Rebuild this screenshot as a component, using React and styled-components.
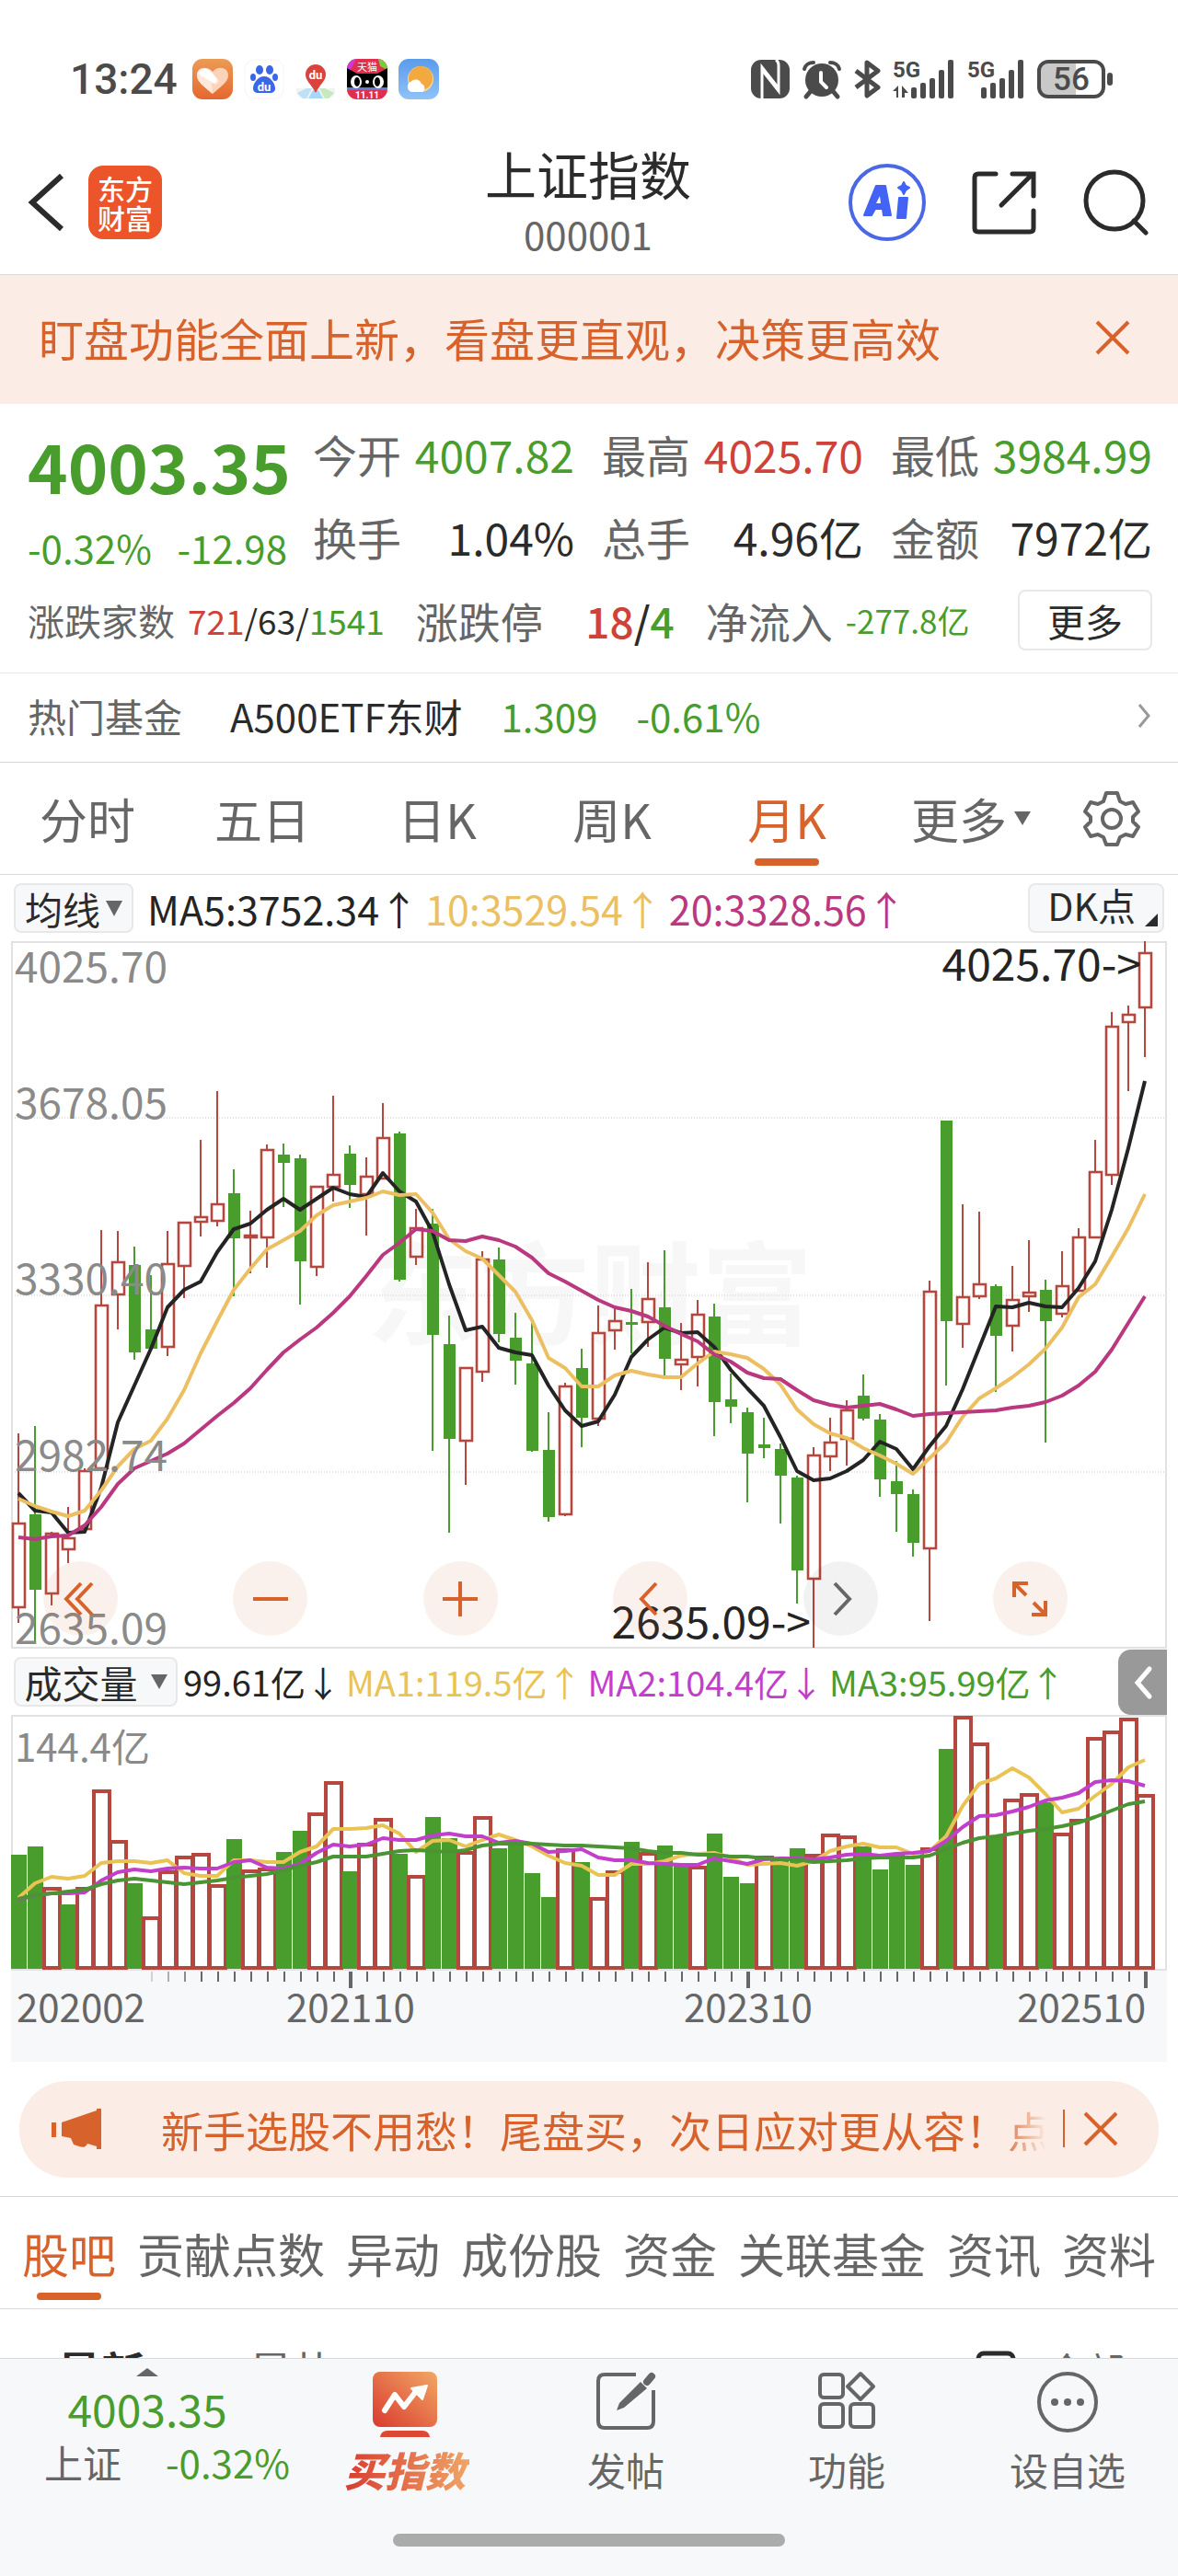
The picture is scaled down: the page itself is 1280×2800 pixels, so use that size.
import React from "react";
import styled, { createGlobalStyle } from "styled-components";

const color = {
  text: "#2b2b2b",
  mid: "#666666",
  soft: "#8a8a8a",
  green: "#489d2d",
  red: "#cf4239",
  orange: "#d8622b",
  accentBg: "#fbede5",
  panel: "#f7f8fa",
  line: "#d9d9d9",
  hair: "#e8e8e8",
  ma5: "#242424",
  ma10: "#ebbf62",
  ma20: "#b9387f",
  vol1: "#e9c353",
  vol2: "#c13fcb",
  candleRed: "#b5473f",
};

const family = '"Noto Sans CJK SC", "Noto Sans", sans-serif';

const GlobalStyle = createGlobalStyle`
  * { box-sizing: border-box; }
  body { margin: 0; background: #fff; color: ${color.text}; font-family: ${family}; }
  button, select { font: inherit; color: inherit; background: none; border: 0; padding: 0; margin: 0; }
  button { cursor: pointer; white-space: nowrap; }
  h1, p, dl, dt, dd { margin: 0; font-weight: 400; }
  svg { display: block; flex: none; overflow: visible; }
`;

/* ---------- data ---------- */

const STEP = 18;
const FIRST = 20;
const cx = (i) => FIRST + i * STEP;

// [kind, high, bodyTop, bodyBottom, low], measured down from the top of the plot
const candles = [
  ["r", 535, 633, 724, 741], ["g", 527, 623, 705, 763], ["r", 642, 644, 709, 722], ["r", 615, 649, 661, 676],
  ["r", 573, 576, 639, 639], ["r", 314, 396, 573, 573], ["r", 315, 349, 384, 422], ["g", 332, 352, 447, 455],
  ["g", 363, 422, 443, 443], ["r", 315, 351, 441, 451], ["r", 306, 306, 353, 388], ["r", 216, 300, 305, 321],
  ["r", 163, 286, 304, 310], ["g", 248, 274, 323, 386], ["r", 293, 320, 322, 361], ["r", 221, 227, 322, 355],
  ["g", 220, 232, 241, 289], ["g", 232, 236, 348, 395], ["r", 267, 267, 354, 364], ["r", 168, 254, 267, 283],
  ["g", 222, 231, 265, 290], ["r", 235, 256, 275, 320], ["r", 176, 214, 258, 258], ["g", 207, 209, 368, 370],
  ["r", 291, 312, 343, 352], ["g", 291, 307, 428, 554], ["g", 407, 438, 541, 643], ["r", 463, 464, 543, 591],
  ["r", 337, 346, 468, 479], ["g", 333, 346, 427, 436], ["g", 404, 431, 456, 482], ["g", 414, 459, 554, 555],
  ["g", 512, 553, 626, 631], ["r", 480, 484, 623, 625], ["g", 443, 464, 518, 550], ["r", 396, 426, 519, 527],
  ["r", 399, 413, 423, 444], ["g", 378, 414, 417, 448], ["r", 349, 389, 414, 441], ["g", 336, 398, 454, 473],
  ["r", 415, 455, 460, 488], ["r", 390, 406, 452, 484], ["g", 394, 408, 501, 538], ["g", 470, 498, 506, 524],
  ["g", 507, 512, 557, 610], ["g", 518, 547, 551, 562], ["g", 546, 552, 581, 633], ["g", 581, 583, 684, 720],
  ["r", 550, 559, 693, 768], ["r", 518, 545, 560, 576], ["r", 499, 510, 541, 570], ["g", 471, 494, 519, 521],
  ["g", 514, 520, 585, 604], ["g", 565, 587, 601, 642], ["g", 596, 601, 654, 669], ["r", 369, 381, 660, 739],
  ["g", 195, 195, 413, 483], ["r", 286, 387, 416, 442], ["r", 294, 373, 386, 389], ["g", 373, 375, 429, 490],
  ["r", 353, 390, 418, 446], ["r", 325, 382, 386, 403], ["g", 368, 379, 413, 545], ["r", 337, 375, 405, 409],
  ["r", 312, 322, 380, 380], ["r", 216, 251, 322, 323], ["r", 77, 93, 254, 265], ["r", 70, 80, 88, 163],
  ["r", 0, 13, 72, 126],
];

const ma5 = [600, 619, 621, 643, 642, 594, 523, 483, 443, 398, 379, 370, 338, 313, 307, 292, 280, 292, 280, 268, 275, 278, 252, 272, 283, 316, 373, 423, 419, 442, 447, 450, 483, 510, 527, 522, 493, 452, 433, 420, 426, 425, 441, 466, 486, 505, 539, 576, 586, 584, 576, 564, 544, 552, 574, 549, 527, 487, 442, 397, 398, 393, 397, 398, 377, 348, 292, 225, 152];
const ma10 = [606, 614, 620, 625, 619, 597, 571, 552, 543, 519, 488, 448, 413, 379, 356, 335, 325, 315, 298, 287, 283, 279, 272, 276, 275, 295, 324, 337, 345, 363, 381, 412, 453, 464, 484, 484, 472, 467, 471, 474, 474, 459, 446, 449, 453, 465, 482, 509, 525, 535, 540, 551, 559, 568, 579, 562, 545, 517, 497, 486, 474, 460, 443, 420, 387, 373, 343, 312, 275];
const ma20 = [648, 650, 647, 646, 635, 615, 590, 573, 565, 557, 546, 531, 516, 502, 486, 466, 447, 433, 420, 404, 386, 364, 341, 328, 313, 315, 325, 326, 321, 325, 332, 344, 361, 370, 380, 390, 398, 402, 408, 418, 427, 435, 449, 457, 469, 475, 476, 488, 499, 504, 507, 505, 503, 509, 516, 514, 513, 512, 511, 510, 507, 505, 501, 494, 483, 468, 444, 415, 386];

const volumes = [151, 142, 186, 205, 186, 80, 135, 182, 218, 168, 152, 149, 183, 134, 167, 165, 148, 125, 105, 71, 169, 138, 111, 150, 173, 110, 133, 147, 109, 144, 141, 171, 197, 144, 159, 197, 168, 137, 148, 141, 162, 163, 128, 175, 182, 152, 154, 144, 150, 128, 130, 142, 167, 150, 162, 143, 36, 0, 29, 131, 90, 84, 94, 127, 112, 23, 16, 2, 85];
const volumeKinds = "ggrgrrrgrrrrrgrrggrrgrrgrggrrggggrgrrgrggrgggrggrrrggggrgrrgrrgrrrrrr";
const volMa1 = [198, 182, 175, 177, 174, 160, 158, 158, 160, 157, 171, 174, 174, 157, 157, 159, 159, 148, 142, 123, 123, 122, 119, 128, 148, 136, 135, 142, 135, 129, 135, 142, 152, 160, 163, 173, 173, 161, 161, 158, 152, 150, 149, 154, 162, 161, 160, 163, 158, 147, 142, 139, 143, 143, 150, 147, 131, 98, 74, 68, 57, 67, 85, 105, 101, 87, 74, 56, 48];
const volMa2 = [200, 195, 193, 193, 192, 179, 170, 167, 169, 166, 165, 166, 166, 159, 157, 165, 166, 161, 149, 140, 142, 140, 133, 135, 135, 130, 128, 131, 131, 138, 136, 139, 148, 147, 145, 154, 157, 157, 160, 161, 162, 162, 155, 158, 161, 156, 155, 155, 156, 154, 151, 150, 152, 150, 149, 147, 136, 121, 109, 108, 104, 99, 92, 89, 84, 72, 70, 71, 76];
const volMa3 = [199, 195, 193, 191, 189, 183, 179, 177, 179, 181, 183, 181, 179, 176, 174, 172, 168, 163, 159, 153, 153, 153, 150, 147, 146, 147, 148, 146, 141, 139, 139, 139, 140, 141, 141, 142, 143, 144, 147, 149, 149, 151, 151, 153, 153, 155, 156, 156, 159, 158, 157, 155, 154, 154, 154, 152, 145, 138, 133, 131, 128, 125, 123, 120, 116, 110, 103, 96, 93];

const toPoints = (values) => values.map((v, i) => `${cx(i)},${v}`).join(" ");

/* ---------- shell ---------- */

const Screen = styled.div`
  display: flex;
  flex-direction: column;
  height: 100vh;
  overflow: hidden;
  background: #fff;
`;

const Content = styled.main`
  flex: 1;
  min-height: 0;
  overflow: hidden;
`;

const StatusBar = styled.div`
  display: flex;
  justify-content: space-between;
  align-items: center;
  padding: 30px 70px 0 76px;
  height: 142px;
  color: #4b4b4b;
`;

const StatusGroup = styled.div`
  display: flex;
  align-items: center;
  gap: ${(p) => p.$gap}px;
`;

const Clock = styled.span`
  font-family: Roboto, sans-serif;
  font-size: 46px;
  font-weight: 500;
  line-height: 56px;
  margin-right: 4px;
`;

const Header = styled.header`
  display: grid;
  grid-template-columns: 1fr auto 1fr;
  align-items: center;
  height: 157px;
  padding: 0 32px 0 30px;
  border-bottom: 1px solid ${color.line};
`;

const HeaderSide = styled.div`
  display: flex;
  align-items: center;
  justify-content: ${(p) => (p.$end ? "flex-end" : "flex-start")};
  gap: ${(p) => (p.$end ? 50 : 26)}px;
`;

const IconButton = styled.button`
  display: flex;
  align-items: center;
  justify-content: center;
  color: ${(p) => p.$color || color.text};
`;

const Logo = styled.a`
  display: grid;
  place-content: center;
  width: 80px;
  height: 80px;
  border-radius: 16px;
  background: #eb5529;
  color: #fff;
  font-size: 30px;
  font-weight: 500;
  line-height: 32px;
  text-align: center;
  text-decoration: none;
`;

const TitleBlock = styled.div`
  text-align: center;
  padding-top: 4px;
`;

const Title = styled.h1`
  font-size: 56px;
  line-height: 64px;
`;

const Code = styled.p`
  font-size: 42px;
  line-height: 68px;
  color: ${color.mid};
`;

const Notice = styled.section`
  display: flex;
  align-items: center;
  justify-content: space-between;
  height: 140px;
  padding: 0 52px 4px 42px;
  background: ${color.accentBg};
  color: ${color.orange};
  font-size: 49px;
  line-height: 72px;
`;

/* ---------- quote ---------- */

const Quote = styled.section`
  padding: 10px 28px 12px 30px;
  border-bottom: 1px solid ${color.hair};
`;

const QuoteTop = styled.div`
  display: grid;
  grid-template-columns: 282px 1fr;
  column-gap: 28px;
`;

const Price = styled.p`
  font-size: 74px;
  font-weight: 700;
  line-height: 112px;
  color: ${color.green};
`;

const Changes = styled.p`
  display: flex;
  justify-content: space-between;
  font-size: 42px;
  line-height: 68px;
  color: ${color.green};
`;

const Stats = styled.dl`
  display: grid;
  grid-template-columns: repeat(3, 1fr);
  column-gap: 30px;
`;

const Stat = styled.div`
  display: flex;
  justify-content: space-between;
  font-size: 48px;
  line-height: 88px;
  white-space: nowrap;
`;

const Label = styled.dt`
  color: ${color.mid};
`;

const Value = styled.dd`
  color: ${(p) => p.$color || color.text};
`;

const Breadth = styled.dl`
  display: flex;
  align-items: center;
  gap: 34px;
  height: 90px;
`;

const BreadthItem = styled.div`
  display: flex;
  align-items: center;
  justify-content: space-between;
  gap: 14px;
  width: ${(p) => p.$width || "auto"};
  font-size: ${(p) => p.$size}px;
  line-height: 64px;
  white-space: nowrap;
`;

const SmallValue = styled.dd`
  font-size: ${(p) => p.$size}px;
  font-weight: ${(p) => p.$weight || 400};
  color: ${(p) => p.$color || color.text};
`;

const Tint = styled.span`
  color: ${(p) => p.$color};
`;

const MoreButton = styled.button`
  margin-left: auto;
  width: 146px;
  height: 66px;
  border: 2px solid ${color.hair};
  border-radius: 8px;
  font-size: 41px;
  line-height: 56px;
`;

const FundRow = styled.a`
  display: flex;
  align-items: center;
  height: 97px;
  padding: 0 30px 4px;
  border-bottom: 1px solid ${color.line};
  color: ${color.text};
  text-decoration: none;
  font-size: 42px;
  line-height: 64px;
  gap: 42px;

  & > :nth-child(2) { margin-left: 10px; }
  & > svg { margin-left: auto; }
`;

/* ---------- period tabs ---------- */

const PeriodTabs = styled.nav`
  display: grid;
  grid-template-columns: repeat(5, 190fr) 210fr 96fr 24fr;
  height: 122px;
  border-bottom: 1px solid ${color.line};
`;

const PeriodTab = styled.button`
  display: flex;
  align-items: center;
  justify-content: center;
  gap: 8px;
  position: relative;
  font-size: 52px;
  line-height: 72px;
  color: ${(p) => (p.$active ? color.orange : color.mid)};

  &::after {
    content: "";
    display: ${(p) => (p.$active ? "block" : "none")};
    position: absolute;
    bottom: 9px;
    width: 70px;
    height: 8px;
    border-radius: 4px;
    background: ${color.orange};
  }
`;

/* ---------- chart ---------- */

const Legend = styled.div`
  display: flex;
  align-items: center;
  position: relative;
  height: ${(p) => p.$height}px;
  padding: 0 15px;
  gap: ${(p) => p.$gap}px;
  font-size: ${(p) => p.$size}px;
  line-height: 56px;
  white-space: nowrap;
`;

const Pill = styled.label`
  display: flex;
  align-items: center;
  justify-content: center;
  gap: ${(p) => p.$gap || 6}px;
  width: ${(p) => p.$width}px;
  height: 54px;
  margin-right: ${(p) => p.$after || 0}px;
  border: 2px solid ${color.hair};
  border-radius: 8px;
  background: ${color.panel};
`;

const PillSelect = styled.select`
  appearance: none;
  font-size: 41px;
  line-height: 48px;
  height: 50px;
  outline: none;
`;

const DkButton = styled.button`
  display: flex;
  align-items: flex-end;
  justify-content: flex-end;
  margin-left: auto;
  width: 148px;
  height: 54px;
  padding: 0 5px 5px 0;
  gap: 10px;
  border: 2px solid ${color.hair};
  border-radius: 8px;
  background: ${color.panel};
  font-size: 41px;
  line-height: 48px;
`;

const Plot = styled.div`
  position: relative;
`;

const Drawing = styled.svg`
  width: 100%;
  height: auto;
  font-family: ${family};
`;

const Controls = styled.div`
  position: absolute;
  inset: auto 120px 13px 47px;
  display: flex;
  justify-content: space-between;
`;

const RoundButton = styled.button`
  display: flex;
  align-items: center;
  justify-content: center;
  width: 81px;
  height: 81px;
  border-radius: 50%;
  background: ${(p) => (p.$muted ? "rgba(0, 0, 0, 0.05)" : "rgba(216, 98, 43, 0.09)")};
  color: ${(p) => (p.$muted ? color.mid : color.orange)};
`;

const DrawerHandle = styled.button`
  display: flex;
  align-items: center;
  justify-content: center;
  position: absolute;
  right: 12px;
  top: 2px;
  width: 53px;
  height: 71px;
  border-radius: 14px 0 0 14px;
  background: #999;
  color: #fff;
`;

/* ---------- promo, tabs, feed ---------- */

const Promo = styled.section`
  display: flex;
  align-items: center;
  height: 105px;
  margin: 21px 21px 20px;
  padding: 0 44px 2px 35px;
  border-radius: 52px;
  background: ${color.accentBg};
  color: ${color.orange};
  font-size: 46px;
  line-height: 64px;
`;

const PromoText = styled.p`
  flex: 1;
  min-width: 0;
  margin-left: 65px;
  overflow: hidden;
  white-space: nowrap;
  mask-image: linear-gradient(to right, #000 calc(100% - 52px), transparent);
`;

const PromoRule = styled.span`
  width: 2px;
  height: 41px;
  margin: 0 20px 0 18px;
  background: ${color.orange};
`;

const SectionTabs = styled.nav`
  display: flex;
  justify-content: space-between;
  height: 123px;
  padding: 0 24px;
  border-top: 1px solid ${color.line};
  border-bottom: 1px solid ${color.line};
`;

const SectionTab = styled.button`
  position: relative;
  display: flex;
  justify-content: center;
  align-items: center;
  font-size: 51px;
  line-height: 72px;
  color: ${(p) => (p.$active ? color.orange : color.mid)};

  &::after {
    content: "";
    display: ${(p) => (p.$active ? "block" : "none")};
    position: absolute;
    bottom: 9px;
    width: 70px;
    height: 8px;
    border-radius: 4px;
    background: ${color.orange};
  }
`;

const FeedBar = styled.div`
  display: flex;
  align-items: flex-start;
  gap: 112px;
  padding: 30px 58px 0 62px;
  font-size: 48px;
  line-height: 72px;
`;

const FeedSort = styled.button`
  font-weight: ${(p) => (p.$active ? 700 : 400)};
  color: ${(p) => (p.$active ? color.text : color.mid)};
`;

const FeedFilter = styled.button`
  display: flex;
  align-items: flex-start;
  gap: 34px;
  margin-left: auto;
  font-size: 42px;
  color: ${color.mid};

  & > svg { margin-top: 15px; color: ${color.text}; }
`;

/* ---------- bottom bar ---------- */

const BottomBar = styled.footer`
  flex: none;
  height: 237px;
  border-top: 1px solid ${color.line};
  background: ${color.panel};
`;

const BottomItems = styled.nav`
  display: grid;
  grid-template-columns: 4fr 3fr 3fr 3fr 3fr;
  height: 190px;
`;

const IndexSummary = styled.button`
  display: flex;
  flex-direction: column;
  align-items: center;
  padding-top: 10px;
  color: ${color.green};
  font-size: 42px;
  line-height: 58px;
`;

const IndexPrice = styled.span`
  font-size: 48px;
  line-height: 60px;
  margin-top: 4px;
`;

const IndexLine = styled.span`
  display: flex;
  align-self: flex-start;
  gap: 48px;
  padding-left: 48px;
`;

const BottomItem = styled.button`
  display: flex;
  flex-direction: column;
  align-items: center;
  justify-content: space-between;
  padding: 14px 0 42px;
  color: ${color.mid};
  font-size: 42px;
  line-height: 56px;
`;

const BuyLabel = styled.span`
  padding: 0 4px;
  font-size: 44px;
  font-weight: 900;
  font-style: italic;
  background: linear-gradient(90deg, #d8392f, #f0a566);
  background-clip: text;
  color: transparent;
`;

const HomeIndicator = styled.div`
  width: 426px;
  height: 14px;
  margin: 0 auto;
  border-radius: 7px;
  background: #aaabab;
`;

/* ---------- icons ---------- */

const HeartApp = () => (
  <svg width="44" height="44" viewBox="0 0 44 44">
    <defs>
      <linearGradient id="heartBg" x1="0" y1="0" x2="0" y2="1">
        <stop offset="0" stopColor="#eb9b55" />
        <stop offset="1" stopColor="#e5672f" />
      </linearGradient>
    </defs>
    <rect width="44" height="44" rx="11" fill="url(#heartBg)" />
    <path d="M22 38C13 30 5 25 5 18c0-9 11-11 17-4 6-7 17-5 17 4 0 7-8 12-17 20z" fill="#fbd3b8" />
    <path d="M5 18c0-9 10-10 15-5l8 9c2 4-3 8-7 4l1 12C13 30 5 25 5 18z" fill="#fde8da" />
    <path d="M10 12c4-3 9 0 12 4l4 5c2 4-2 7-5 4L9 18c-2-2-1-5 1-6z" fill="#fff" />
  </svg>
);

const BaiduApp = () => (
  <svg width="44" height="44" viewBox="0 0 44 44">
    <rect x="1" y="1" width="42" height="42" rx="10" fill="#fff" stroke="#f5f5f5" />
    <g fill="#3a66e8">
      <ellipse cx="17" cy="12" rx="4" ry="5" />
      <ellipse cx="28" cy="12" rx="4" ry="5" />
      <ellipse cx="10" cy="20" rx="3" ry="4" />
      <ellipse cx="34" cy="20" rx="3" ry="4" />
      <path d="M22 19c7 0 12 8 12 13 0 6-6 5-12 5s-12 1-12-5c0-5 5-13 12-13z" />
    </g>
    <text x="22" y="35" fontSize="13" fontWeight="700" fill="#fff" textAnchor="middle" fontFamily="Roboto, sans-serif">du</text>
  </svg>
);

const MapApp = () => (
  <svg width="44" height="44" viewBox="0 0 44 44">
    <path d="M1 32h42v3c0 5-4 8-9 8H10c-5 0-9-3-9-8z" fill="#eef5f3" />
    <path d="M2 37l10-5h6l-6 11H8z" fill="#bfe0f4" />
    <path d="M42 37l-10-5h-6l6 11h4z" fill="#c6e9bd" />
    <path d="M14 43l5-9h6l5 9z" fill="#a8d8f7" />
    <path d="M22 37C17 27 11 24 11 17a11 11 0 0 1 22 0c0 7-6 10-11 20z" fill="#d9433b" />
    <text x="22" y="22" fontSize="13" fontWeight="700" fill="#fff" textAnchor="middle" fontFamily="Roboto, sans-serif">du</text>
  </svg>
);

const TmallApp = () => (
  <svg width="44" height="44" viewBox="0 0 44 44">
    <defs>
      <clipPath id="tmallClip"><rect width="44" height="44" rx="11" /></clipPath>
    </defs>
    <g clipPath="url(#tmallClip)">
      <rect width="44" height="44" fill="#e02e4c" />
      <path d="M0 0h10L4 12H0z" fill="#d13ad0" />
      <path d="M34 0h10v12l-8-4z" fill="#7fc93c" />
      <path d="M0 10l11 6h22l11-6v22H0z" fill="#000" />
      <path d="M0 31h44v3H0z" fill="#5c7fd0" />
      <ellipse cx="10" cy="25" rx="6" ry="7" fill="#fff" />
      <ellipse cx="34" cy="25" rx="6" ry="7" fill="#fff" />
      <ellipse cx="11" cy="25" rx="3" ry="5" fill="#000" />
      <ellipse cx="33" cy="25" rx="3" ry="5" fill="#000" />
      <circle cx="22" cy="25" r="2" fill="#fff" />
    </g>
    <text x="22" y="13" fontSize="11" fill="#fff" textAnchor="middle" fontFamily={family}>天猫</text>
    <text x="22" y="43" fontSize="10" fontWeight="700" fill="#fff" textAnchor="middle" fontFamily="Roboto, sans-serif">11.11</text>
  </svg>
);

const WeatherApp = () => (
  <svg width="44" height="44" viewBox="0 0 44 44">
    <defs>
      <linearGradient id="sky" x1="0" y1="0" x2="0" y2="1">
        <stop offset="0" stopColor="#5b9bea" />
        <stop offset="1" stopColor="#8fc3f8" />
      </linearGradient>
    </defs>
    <rect width="44" height="44" rx="11" fill="url(#sky)" />
    <circle cx="24" cy="22" r="14" fill="#f5d9a0" />
    <circle cx="24" cy="21" r="13" fill="#f2a93f" />
    <path d="M14 36a6 6 0 0 1-1-11 7 7 0 0 1 12 2 5 5 0 0 1 1 9z" fill="#fff" />
  </svg>
);

const NfcIcon = () => (
  <svg width="42" height="42" viewBox="0 0 42 42">
    <rect width="42" height="42" rx="11" fill="currentColor" />
    <path d="M12 42V8l18 23" stroke="#fff" strokeWidth="3" fill="none" />
    <path d="M12 11l18 23V6q0-4-3-6" stroke="#fff" strokeWidth="3" fill="none" />
  </svg>
);

const AlarmIcon = () => (
  <svg width="42" height="42" viewBox="0 0 42 42" stroke="currentColor" strokeLinecap="round" fill="none">
    <circle cx="21" cy="22" r="18" fill="currentColor" stroke="none" />
    <path d="M2 10c1-4 5-7 10-7M40 10c-1-4-5-7-10-7" strokeWidth="4" />
    <path d="M9 34l-5 6M33 34l5 6" strokeWidth="5" />
    <path d="M20 14v10l6 6" stroke="#fff" strokeWidth="4" />
  </svg>
);

const BluetoothIcon = () => (
  <svg width="28" height="42" viewBox="0 0 28 42" fill="none" stroke="currentColor" strokeWidth="5" strokeLinejoin="round">
    <path d="M2 12l24 18-12 9V3l12 9L2 30" />
  </svg>
);

const SignalIcon = ({ data }) => (
  <svg width={data ? 67 : 62} height="42" viewBox={data ? "0 0 67 42" : "5 0 62 42"} fill="currentColor">
    <text x={data ? 0 : 5} y="19" fontSize="24" fontWeight="700" fontFamily="Roboto, sans-serif">5G</text>
    {data && <path d="M6 28v13H4v-7H0zM10 28l7 8h-4v5h-3z" />}
    <rect x="20" y="30" width="6" height="12" rx="2" />
    <rect x="30" y="25" width="6" height="17" rx="2" />
    <rect x="40" y="20" width="6" height="22" rx="2" />
    <rect x="50" y="11" width="6" height="31" rx="2" />
    <rect x="60" y="0" width="6" height="42" rx="2" />
  </svg>
);

const BatteryIcon = () => (
  <svg width="83" height="42" viewBox="0 0 83 42">
    <rect x="2" y="2" width="70" height="38" rx="10" fill="#fff" />
    <path d="M12 3h30v36H12a9 9 0 0 1-9-9V12a9 9 0 0 1 9-9z" fill="#c9c9c9" />
    <rect x="2" y="2" width="70" height="38" rx="10" fill="none" stroke="currentColor" strokeWidth="4" />
    <rect x="76" y="14" width="6" height="14" rx="3" fill="currentColor" />
    <text x="37" y="33" fontSize="35" fontWeight="500" fill="currentColor" textAnchor="middle" fontFamily="Roboto, sans-serif">56</text>
  </svg>
);

const Stroke = ({ w, h, d, sw = 4, cap = "butt" }) => (
  <svg width={w} height={h} viewBox={`0 0 ${w} ${h}`} fill="none" stroke="currentColor" strokeWidth={sw} strokeLinecap={cap}>
    <path d={d} />
  </svg>
);

const AiIcon = () => (
  <svg width="84" height="84" viewBox="0 0 84 84">
    <circle cx="42" cy="42" r="40" fill="none" stroke="#4a68e6" strokeWidth="4" />
    <g fill="#4263f5" stroke="#4263f5" strokeLinejoin="round">
      <path d="M30 24h10l6 32h-8l-1-7h-8l-4 7h-8z" strokeWidth="2" />
      <path d="M55 37h9l-2 22h-9z" strokeWidth="2" />
      <path d="M60 20l2 4 4 2-4 3-2 4-2-4-4-3 4-2z" strokeWidth="2" />
    </g>
    <path d="M34 35l-4 8h5z" fill="#fff" />
  </svg>
);

const ShareIcon = () => <Stroke w={70} h={70} sw={5} cap="round" d="M26 4H7q-4 0-4 4v55q0 4 4 4h56q4 0 4-4V44M44 4h23v24M65 5L32 38" />;

const SearchIcon = () => (
  <svg width="72" height="72" viewBox="0 0 72 72" fill="none" stroke="currentColor" strokeWidth="5" strokeLinecap="round">
    <circle cx="35" cy="34" r="31" />
    <path d="M56 56l13 13" />
  </svg>
);

const GearIcon = () => (
  <svg width="62" height="62" viewBox="0 0 62 62" fill="none" stroke="currentColor" strokeWidth="4" strokeLinejoin="round">
    <path d="M25 3h12l3 9 6 3 8-2 6 10-6 6v5l6 6-6 10-8-2-6 3-3 8H25l-3-8-6-3-8 2-6-10 6-6v-5l-6-6 6-10 8 2 6-3z" />
    <circle cx="31" cy="31" r="10" />
  </svg>
);

const Caret = ({ w = 18, h = 15, up }) => (
  <svg width={w} height={h} viewBox="0 0 18 15" preserveAspectRatio="none" fill="currentColor">
    <path d={up ? "M9 0l9 15H0z" : "M0 0h18L9 15z"} />
  </svg>
);

const Chevron = () => (
  <svg width="14" height="28" viewBox="0 0 14 28" fill="none" stroke="#999" strokeWidth="3">
    <path d="M2 2l10 12L2 26" />
  </svg>
);

const Megaphone = () => (
  <svg width="54" height="46" viewBox="0 0 54 44" fill="currentColor">
    <rect x="0" y="15" width="5" height="16" />
    <path d="M11 15L49 2V0h5v44h-5v-3l-10-3c-2 5-6 4-9 3l-6-2-3-7-10-2z" />
  </svg>
);

const BuyIcon = () => (
  <svg width="70" height="70" viewBox="0 0 70 70">
    <defs>
      <linearGradient id="buyBg" x1="0" y1="1" x2="1" y2="0">
        <stop offset="0" stopColor="#d93a2f" />
        <stop offset="1" stopColor="#f2a864" />
      </linearGradient>
    </defs>
    <rect width="70" height="60" rx="8" fill="url(#buyBg)" />
    <path d="M8 71q1-7 8-7h38q7 0 8 7z" fill="#dd4835" />
    <path d="M13 42l11-17 10 13 14-18" fill="none" stroke="#fff" strokeWidth="6" strokeLinejoin="round" strokeLinecap="round" />
    <path d="M42 18l17-3-5 15z" fill="#fff" stroke="#fff" strokeWidth="2" strokeLinejoin="round" />
  </svg>
);

const PostIcon = () => (
  <svg width="66" height="64" viewBox="0 0 66 64" fill="none" stroke="currentColor" strokeWidth="4">
    <path d="M44 3H10q-7 0-7 7v44q0 7 7 7h46q7 0 7-7V20" />
    <path d="M56 11l5-6" strokeWidth="8" strokeLinecap="round" />
    <path d="M49 11l7 7L31 39l-8 3 3-8z" fill="currentColor" stroke="none" />
  </svg>
);

const GridIcon = () => (
  <svg width="62" height="62" viewBox="0 0 62 62" fill="none" stroke="currentColor" strokeWidth="4" strokeLinejoin="round">
    <rect x="2" y="3" width="25" height="25" rx="4" />
    <rect x="2" y="35" width="25" height="25" rx="4" />
    <rect x="35" y="35" width="25" height="25" rx="4" />
    <path d="M46 2l14 14-14 14-14-14z" />
  </svg>
);

const DotsIcon = () => (
  <svg width="66" height="66" viewBox="0 0 66 66" fill="none" stroke="currentColor" strokeWidth="4">
    <circle cx="33" cy="33" r="31" />
    <g fill="currentColor" stroke="none">
      <circle cx="19" cy="33" r="4" />
      <circle cx="33" cy="33" r="4" />
      <circle cx="47" cy="33" r="4" />
    </g>
  </svg>
);

const Cross = ({ size }) => <Stroke w={size} h={size} d={`M2 2L${size - 2} ${size - 2}M${size - 2} 2L2 ${size - 2}`} />;

/* ---------- charts ---------- */

const axisLabels = [["4025.70", 45], ["3678.05", 193], ["3330.40", 384], ["2982.74", 576], ["2635.09", 764]];

const PriceChart = () => (
  <Drawing viewBox="0 0 1280 768" role="img" aria-label="上证指数 月K">
    <text x="641" y="429" fontSize="121" fontWeight="700" fill="#f7f7f7" textAnchor="middle">东方财富</text>
    <rect x="13" y="1" width="1254" height="767" fill="none" stroke="#e2e2e2" strokeWidth="2" />
    {[192, 385, 577].map((y) => (
      <path key={y} d={`M13 ${y}H1267`} stroke="#e2e2e2" strokeWidth="2" strokeDasharray="1 2" />
    ))}
    {candles.map(([kind, high, top, bottom, low], i) => {
      const x = cx(i);
      return kind === "g" ? (
        <g key={i} fill={color.green}>
          <rect x={x - 1} y={high} width="2" height={low - high} />
          <rect x={x - 6} y={top} width="13" height={bottom - top} />
        </g>
      ) : (
        <g key={i} stroke={color.candleRed} fill="none">
          <path d={`M${x} ${high}V${top}M${x} ${bottom}V${low}`} strokeWidth="2" />
          <rect x={x - 6} y={top} width="13" height={bottom - top} strokeWidth="2.6" />
        </g>
      );
    })}
    <g fill="none" strokeWidth="4" strokeLinejoin="round">
      <polyline points={toPoints(ma5)} stroke={color.ma5} />
      <polyline points={toPoints(ma10)} stroke={color.ma10} />
      <polyline points={toPoints(ma20)} stroke={color.ma20} />
    </g>
    <g fontSize="46" fill={color.soft}>
      {axisLabels.map(([label, y]) => (
        <text key={label} x="16" y={y}>{label}</text>
      ))}
    </g>
    <g fontSize="48" fill={color.ma5} textAnchor="end">
      <text x="1240" y="43">{"4025.70->"}</text>
      <text x="881" y="758">{"2635.09->"}</text>
    </g>
  </Drawing>
);

const VolumeChart = () => (
  <Drawing viewBox="0 0 1280 376" role="img" aria-label="成交量">
    <rect x="12" y="276" width="1256" height="100" fill={color.panel} />
    <rect x="13" y="0" width="1254" height="276" fill="none" stroke="#e2e2e2" strokeWidth="2" />
    {volumes.map((top, i) =>
      volumeKinds[i] === "g" ? (
        <rect key={i} x={cx(i) - 8} y={top} width="17" height={275 - top} fill={color.green} />
      ) : (
        <rect key={i} x={cx(i) - 8} y={top + 2} width="17" height={272 - top} fill="#fff" stroke={color.candleRed} strokeWidth="4" />
      )
    )}
    <g fill="none" strokeWidth="4" strokeLinejoin="round">
      <polyline points={toPoints(volMa1)} stroke={color.vol1} />
      <polyline points={toPoints(volMa2)} stroke={color.vol2} />
      <polyline points={toPoints(volMa3)} stroke="#4b9434" />
    </g>
    <g stroke={color.mid}>
      {volumes.map((_, i) => {
        if (i < 8) return null;
        const major = i % 24 === 20;
        return (
          <path key={i} d={`M${cx(i) + 1} 278V${major ? 296 : 289}`} strokeWidth={major ? 4 : 2} opacity={Math.min(1, (i - 7) / 4)} />
        );
      })}
    </g>
    <g fontSize="42" fill={color.mid}>
      <text x="16" y="50" fill={color.soft}>144.4亿</text>
      <text x="18" y="333">202002</text>
      <text x="381" y="333" textAnchor="middle">202110</text>
      <text x="813" y="333" textAnchor="middle">202310</text>
      <text x="1245" y="333" textAnchor="end">202510</text>
    </g>
  </Drawing>
);

/* ---------- page ---------- */

const stats = [
  ["今开", "4007.82", color.green],
  ["最高", "4025.70", color.red],
  ["最低", "3984.99", color.green],
  ["换手", "1.04%"],
  ["总手", "4.96亿"],
  ["金额", "7972亿"],
];

const sections = ["股吧", "贡献点数", "异动", "成份股", "资金", "关联基金", "资讯", "资料"];

export default function App() {
  return (
    <Screen>
      <GlobalStyle />
      <Content>
        <StatusBar>
          <StatusGroup $gap={12}>
            <Clock>13:24</Clock>
            <HeartApp />
            <BaiduApp />
            <MapApp />
            <TmallApp />
            <WeatherApp />
          </StatusGroup>
          <StatusGroup $gap={14}>
            <NfcIcon />
            <AlarmIcon />
            <BluetoothIcon />
            <SignalIcon data />
            <SignalIcon />
            <BatteryIcon />
          </StatusGroup>
        </StatusBar>

        <Header>
          <HeaderSide>
            <IconButton aria-label="返回"><Stroke w={40} h={64} sw={6} d="M37 3L5 32L37 61" /></IconButton>
            <Logo href="#">东方<br />财富</Logo>
          </HeaderSide>
          <TitleBlock>
            <Title>上证指数</Title>
            <Code>000001</Code>
          </TitleBlock>
          <HeaderSide $end>
            <IconButton aria-label="Ai"><AiIcon /></IconButton>
            <IconButton aria-label="分享"><ShareIcon /></IconButton>
            <IconButton aria-label="搜索"><SearchIcon /></IconButton>
          </HeaderSide>
        </Header>

        <Notice>
          <p>盯盘功能全面上新，看盘更直观，决策更高效</p>
          <IconButton aria-label="关闭" $color={color.orange}><Cross size={38} /></IconButton>
        </Notice>

        <Quote>
          <QuoteTop>
            <div>
              <Price>4003.35</Price>
              <Changes><span>-0.32%</span><span>-12.98</span></Changes>
            </div>
            <Stats>
              {stats.map(([label, value, tone]) => (
                <Stat key={label}>
                  <Label>{label}</Label>
                  <Value $color={tone}>{value}</Value>
                </Stat>
              ))}
            </Stats>
          </QuoteTop>
          <Breadth>
            <BreadthItem $size={40}>
              <Label>涨跌家数</Label>
              <SmallValue $size={37}>
                <Tint $color={color.red}>721</Tint>/63/<Tint $color={color.green}>1541</Tint>
              </SmallValue>
            </BreadthItem>
            <BreadthItem $size={46} $width="281px">
              <Label>涨跌停</Label>
              <SmallValue $size={46} $weight={500}>
                <Tint $color={color.red}>18</Tint>/<Tint $color={color.green}>4</Tint>
              </SmallValue>
            </BreadthItem>
            <BreadthItem $size={46}>
              <Label>净流入</Label>
              <SmallValue $size={35} $color={color.green}>-277.8亿</SmallValue>
            </BreadthItem>
            <MoreButton>更多</MoreButton>
          </Breadth>
        </Quote>

        <FundRow href="#">
          <Tint $color={color.mid}>热门基金</Tint>
          <span>A500ETF东财</span>
          <Tint $color={color.green}>1.309</Tint>
          <Tint $color={color.green}>-0.61%</Tint>
          <Chevron />
        </FundRow>

        <PeriodTabs>
          {["分时", "五日", "日K", "周K", "月K"].map((t) => (
            <PeriodTab key={t} $active={t === "月K"}>{t}</PeriodTab>
          ))}
          <PeriodTab>更多<Caret /></PeriodTab>
          <PeriodTab aria-label="设置"><GearIcon /></PeriodTab>
        </PeriodTabs>

        <Legend $height={72} $size={43} $gap={7}>
          <Pill $width={130} $after={8}>
            <PillSelect aria-label="指标"><option>均线</option></PillSelect>
            <Tint $color={color.mid}><Caret h={17} /></Tint>
          </Pill>
          <Tint $color={color.ma5}>MA5:3752.34↑</Tint>
          <Tint $color={color.ma10}>10:3529.54↑</Tint>
          <Tint $color={color.ma20}>20:3328.56↑</Tint>
          <DkButton>
            DK点
            <svg width="14" height="14" viewBox="0 0 14 14"><path d="M14 0v14H0z" fill="currentColor" /></svg>
          </DkButton>
        </Legend>

        <Plot>
          <PriceChart />
          <Controls>
            <RoundButton aria-label="最早"><Stroke w={34} h={38} d="M17 2L1 19L17 36M29 2L13 19L29 36" /></RoundButton>
            <RoundButton aria-label="缩小"><Stroke w={40} h={40} d="M1 20H39" /></RoundButton>
            <RoundButton aria-label="放大"><Stroke w={40} h={40} d="M1 20H39M20 1V39" /></RoundButton>
            <RoundButton aria-label="向前"><Stroke w={24} h={38} d="M18 2L2 19L18 36" /></RoundButton>
            <RoundButton aria-label="向后" $muted><Stroke w={24} h={38} d="M6 2L22 19L6 36" /></RoundButton>
            <RoundButton aria-label="全屏"><Stroke w={40} h={40} d="M3 18V3H18M3 3L16 16M37 22V37H22M37 37L24 24" /></RoundButton>
          </Controls>
        </Plot>

        <Legend $height={74} $size={38} $gap={6}>
          <Pill $width={178} $gap={14}>
            <PillSelect aria-label="副图指标"><option>成交量</option></PillSelect>
            <Tint $color={color.mid}><Caret h={16} /></Tint>
          </Pill>
          <Tint $color={color.ma5}>99.61亿↓</Tint>
          <Tint $color={color.vol1}>MA1:119.5亿↑</Tint>
          <Tint $color={color.vol2}>MA2:104.4亿↓</Tint>
          <Tint $color={color.green}>MA3:95.99亿↑</Tint>
          <DrawerHandle aria-label="展开"><Stroke w={20} h={36} sw={5} cap="round" d="M17 3L4 18L17 33" /></DrawerHandle>
        </Legend>
        <VolumeChart />

        <Promo>
          <Megaphone />
          <PromoText>新手选股不用愁！尾盘买，次日应对更从容！点</PromoText>
          <PromoRule />
          <IconButton aria-label="关闭" $color={color.orange}><Cross size={38} /></IconButton>
        </Promo>

        <SectionTabs>
          {sections.map((s) => (
            <SectionTab key={s} $active={s === "股吧"}>{s}</SectionTab>
          ))}
        </SectionTabs>

        <FeedBar>
          <FeedSort $active>最新</FeedSort>
          <FeedSort>最热</FeedSort>
          <FeedFilter>
            <svg width="44" height="44" viewBox="0 0 44 44" fill="none" stroke="currentColor" strokeWidth="5">
              <rect x="3" y="3" width="38" height="38" rx="6" />
            </svg>
            全部
          </FeedFilter>
        </FeedBar>
      </Content>

      <BottomBar>
        <BottomItems>
          <IndexSummary>
            <Tint $color={color.mid}><Caret up w={24} h={9} /></Tint>
            <IndexPrice>4003.35</IndexPrice>
            <IndexLine><Tint $color={color.mid}>上证</Tint><span>-0.32%</span></IndexLine>
          </IndexSummary>
          <BottomItem><BuyIcon /><BuyLabel>买指数</BuyLabel></BottomItem>
          <BottomItem><PostIcon />发帖</BottomItem>
          <BottomItem><GridIcon />功能</BottomItem>
          <BottomItem><DotsIcon />设自选</BottomItem>
        </BottomItems>
        <HomeIndicator />
      </BottomBar>
    </Screen>
  );
}
